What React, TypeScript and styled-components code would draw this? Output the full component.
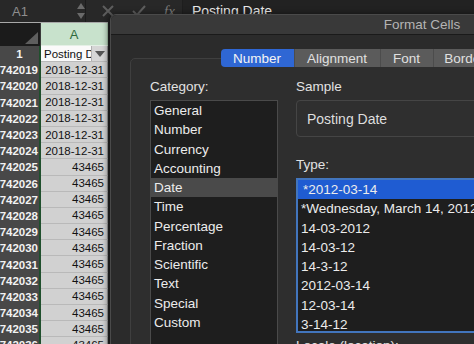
import React from "react";
import styled, { createGlobalStyle } from "styled-components";

const GlobalStyle = createGlobalStyle`
  html, body {
    margin: 0;
    padding: 0;
    background: #1f1f1f;
  }
`;

const Screen = styled.div`
  position: relative;
  width: 474px;
  height: 344px;
  overflow: hidden;
  background: #262626;
  font-family: "Liberation Sans", Arial, sans-serif;
`;

/* formula bar */

const FormulaBar = styled.div`
  display: flex;
  align-items: center;
  height: 22px;
  background: #282828;
`;

const NameBox = styled.div`
  display: flex;
  align-items: center;
  width: 86px;
  height: 100%;
  padding-left: 12px;
  box-sizing: border-box;
  border-right: 1px solid #1c1c1c;
  color: #8e8e8e;
  font-size: 13px;
  gap: 49px;
`;

const Stepper = styled.div`
  display: flex;
  flex-direction: column;
  gap: 4px;
`;

const Arrow = styled.span<{ $down?: boolean }>`
  width: 0;
  height: 0;
  border-left: 4px solid transparent;
  border-right: 4px solid transparent;
  ${(p) =>
    p.$down
      ? "border-top: 6px solid #6a6a6a;"
      : "border-bottom: 6px solid #6a6a6a;"}
`;

const BarIcons = styled.div`
  display: flex;
  align-items: center;
  gap: 18px;
  padding-left: 16px;
  width: 97px;
  height: 100%;
  box-sizing: border-box;
  border-right: 1px solid #1e1e1e;
`;

const Fx = styled.span`
  font-family: "Liberation Serif", "Times New Roman", serif;
  font-style: italic;
  font-size: 15px;
  color: #7c7c7c;
`;

const FormulaInput = styled.div`
  flex: 1;
  height: 100%;
  padding-left: 9px;
  display: flex;
  align-items: center;
  background: #222;
  color: #e8e8e8;
  font-size: 14px;
`;

/* sheet */

const Sheet = styled.div`
  display: grid;
  grid-template-columns: 41px 67px;
  grid-template-rows: 23px;
  grid-auto-rows: 16.2px;
  border-top: 1px solid #a8a8a8;
  width: 108px;
  font-size: 11.5px;
  white-space: nowrap;
`;

const Corner = styled.div`
  position: relative;
  background: #1b1b1b;
  border-right: 1px solid #3a3a3a;
  &::after {
    content: "";
    position: absolute;
    right: 2px;
    bottom: 2px;
    border-left: 13px solid transparent;
    border-bottom: 12px solid #5e5e5e;
  }
`;

const ColHeader = styled.div`
  box-sizing: border-box;
  background: #c8e2cc;
  border-bottom: 1px solid #e4f0e6;
  border-right: 1px solid #a9c9ae;
  display: flex;
  align-items: center;
  justify-content: center;
  color: #2f6a3c;
  font-size: 13px;
`;

const RowHeader = styled.div<{ $center?: boolean }>`
  background: #484848;
  border-right: 2px solid #1f4f2c;
  color: #f2f2f2;
  font-size: 11.5px;
  font-weight: bold;
  display: flex;
  align-items: center;
  justify-content: ${(p) => (p.$center ? "center" : "flex-end")};
  padding-right: ${(p) => (p.$center ? "0" : "1px")};
  box-sizing: border-box;
  overflow: hidden;
`;

const Cell = styled.div`
  background: #d1d1d1;
  border-bottom: 1px solid #b9b9b9;
  border-right: 1px solid #9c9c9c;
  box-sizing: border-box;
  color: #111;
  display: flex;
  align-items: center;
  justify-content: flex-end;
  padding-right: 3px;
`;

const HeadCell = styled.div`
  background: #fafafa;
  border-bottom: 1px solid #b9b9b9;
  border-right: 1px solid #9c9c9c;
  box-sizing: border-box;
  color: #111;
  display: flex;
  align-items: center;
  padding-left: 3px;
  overflow: hidden;
`;

const HeadText = styled.span`
  flex: 1;
  overflow: hidden;
`;

const FilterButton = styled.span`
  flex: none;
  width: 15px;
  height: 100%;
  background: #d6d6d6;
  border-left: 1px solid #b0b0b0;
  display: flex;
  align-items: center;
  justify-content: center;
  &::after {
    content: "";
    border-left: 5px solid transparent;
    border-right: 5px solid transparent;
    border-top: 6px solid #555;
  }
`;

/* dialog */

const Dialog = styled.div`
  position: absolute;
  left: 110px;
  top: 14px;
  width: 622px;
  height: 360px;
  background: #2b2b2b;
  border: 1px solid #4a4a4a;
  border-radius: 6px 6px 0 0;
  box-shadow: -2px 0 6px rgba(0, 0, 0, 0.5);
  color: #e6e6e6;
  font-size: 13px;
`;

const TitleBar = styled.div`
  height: 19px;
  background: #393939;
  border-bottom: 1px solid #1a1a1a;
  border-radius: 6px 6px 0 0;
  display: flex;
  align-items: center;
  justify-content: center;
  color: #b4b4b4;
  font-size: 13.5px;
`;

const DialogBody = styled.div`
  padding: 14px 19px 0;
`;

const Tabs = styled.div`
  position: relative;
  z-index: 1;
  display: flex;
  justify-content: center;
  height: 18px;
`;

const Tab = styled.div<{ $active?: boolean; $w: number }>`
  width: ${(p) => p.$w}px;
  display: flex;
  align-items: center;
  justify-content: center;
  background: ${(p) => (p.$active ? "#2f67d4" : "#5b5b5b")};
  color: ${(p) => (p.$active ? "#f4f4f4" : "#e0e0e0")};
  border-left: 1px solid #4c4c4c;
  font-size: 13.5px;
  &:first-child {
    border-left: none;
    border-radius: 4px 0 0 4px;
  }
  &:last-child {
    border-radius: 0 4px 4px 0;
  }
`;

const Panel = styled.div`
  margin-top: -9px;
  height: 320px;
  background: #2e2e2e;
  border: 1px solid #3f3f3f;
  border-radius: 5px;
  padding: 20px 19px 0;
  display: grid;
  grid-template-columns: 128px 1fr;
  column-gap: 18px;
`;

const Column = styled.div`
  display: flex;
  flex-direction: column;
`;

const Label = styled.div<{ $gap?: number }>`
  height: 16px;
  line-height: 16px;
  font-size: 13.5px;
  color: #e2e2e2;
  margin-top: ${(p) => p.$gap ?? 0}px;
  margin-bottom: 5px;
`;

const List = styled.div<{ $focus?: boolean; $h: number }>`
  height: ${(p) => p.$h}px;
  box-sizing: border-box;
  background: #1e1e1e;
  border: ${(p) => (p.$focus ? "2px solid #4275bd" : "1px solid #4a4a4a")};
  overflow: hidden;
`;

const Item = styled.div<{ $sel?: "grey" | "blue" }>`
  height: 19.25px;
  line-height: 19.25px;
  padding-left: ${(p) => (p.$sel === "blue" ? 5 : 3)}px;
  font-size: 13.5px;
  color: #ececec;
  white-space: nowrap;
  background: ${(p) =>
    p.$sel === "grey" ? "#4a4a4a" : p.$sel === "blue" ? "#1f5cd2" : "transparent"};
`;

const SampleBox = styled.div`
  height: 37px;
  box-sizing: border-box;
  background: #2f2f2f;
  border: 1px solid #454545;
  border-radius: 4px;
  display: flex;
  align-items: center;
  padding-left: 10px;
  font-size: 14px;
  color: #dedede;
`;

const categories = [
  "General",
  "Number",
  "Currency",
  "Accounting",
  "Date",
  "Time",
  "Percentage",
  "Fraction",
  "Scientific",
  "Text",
  "Special",
  "Custom",
];

const types = [
  "*2012-03-14",
  "*Wednesday, March 14, 2012",
  "14-03-2012",
  "14-03-12",
  "14-3-12",
  "2012-03-14",
  "12-03-14",
  "3-14-12",
];

const rows = Array.from({ length: 18 }, (_, i) => ({
  n: 742019 + i,
  v: i < 6 ? "2018-12-31" : "43465",
}));

const tabs = [
  { label: "Number", w: 73 },
  { label: "Alignment", w: 85 },
  { label: "Font", w: 52 },
  { label: "Border", w: 62 },
  { label: "Fill", w: 40 },
  { label: "Protection", w: 86 },
];

const App = () => {
  return (
    <Screen>
      <GlobalStyle />
      <FormulaBar>
        <NameBox>
          A1
          <Stepper>
            <Arrow />
            <Arrow $down />
          </Stepper>
        </NameBox>
        <BarIcons>
          <svg width="12" height="12" viewBox="0 0 12 12">
            <path d="M1 1 L11 11 M11 1 L1 11" stroke="#5e5e5e" strokeWidth="2" />
          </svg>
          <svg width="14" height="12" viewBox="0 0 14 12">
            <path d="M1 6 L5 10 L13 1" stroke="#5e5e5e" strokeWidth="2" fill="none" />
          </svg>
          <Fx>fx</Fx>
        </BarIcons>
        <FormulaInput>Posting Date</FormulaInput>
      </FormulaBar>

      <Sheet>
        <Corner />
        <ColHeader>A</ColHeader>
        <RowHeader $center>1</RowHeader>
        <HeadCell>
          <HeadText>Posting Date</HeadText>
          <FilterButton />
        </HeadCell>
        {rows.map((r) => (
          <React.Fragment key={r.n}>
            <RowHeader>{r.n}</RowHeader>
            <Cell>{r.v}</Cell>
          </React.Fragment>
        ))}
      </Sheet>

      <Dialog>
        <TitleBar>Format Cells</TitleBar>
        <DialogBody>
          <Tabs>
            {tabs.map((t, i) => (
              <Tab key={t.label} $w={t.w} $active={i === 0}>
                {t.label}
              </Tab>
            ))}
          </Tabs>
          <Panel>
            <Column>
              <Label>Category:</Label>
              <List $h={270}>
                {categories.map((c) => (
                  <Item key={c} $sel={c === "Date" ? "grey" : undefined}>
                    {c}
                  </Item>
                ))}
              </List>
            </Column>
            <Column>
              <Label>Sample</Label>
              <SampleBox>Posting Date</SampleBox>
              <Label $gap={20}>Type:</Label>
              <List $focus $h={155}>
                {types.map((t, i) => (
                  <Item key={t} $sel={i === 0 ? "blue" : undefined}>
                    {t}
                  </Item>
                ))}
              </List>
              <Label $gap={5}>Locale (location):</Label>
            </Column>
          </Panel>
        </DialogBody>
      </Dialog>
    </Screen>
  );
};

export default App;
